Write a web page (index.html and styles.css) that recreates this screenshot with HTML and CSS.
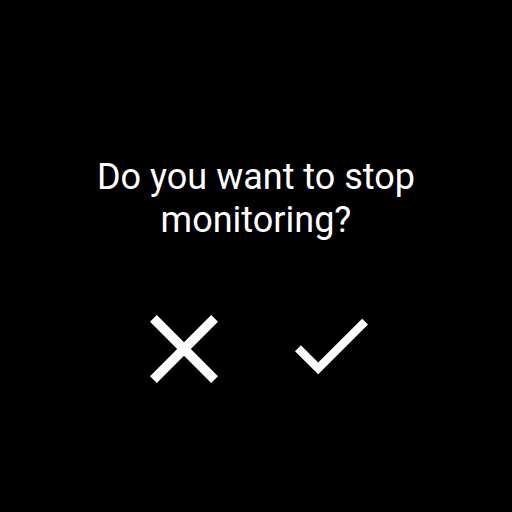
FILE: index.html
```html
<!DOCTYPE html>
<html>
<head>
<meta charset="utf-8">
<link rel="stylesheet" href="styles.css">
</head>
<body>
<main class="screen">
  <p class="question">Do you want to stop<br>monitoring?</p>
  <div class="actions">
    <button class="action action-cancel" aria-label="Cancel">
      <svg width="68" height="68" viewBox="5 5 14 14"><path fill="#fff" d="M19 6.41L17.59 5 12 10.59 6.41 5 5 6.41 10.59 12 5 17.59 6.41 19 12 13.41 17.59 19 19 17.59 13.41 12z"/></svg>
    </button>
    <button class="action action-confirm" aria-label="Confirm">
      <svg width="73" height="57" viewBox="3.41 5.59 17.59 13.41"><path fill="#fff" d="M9 16.17L4.83 12l-1.42 1.41L9 19 21 7l-1.41-1.41z"/></svg>
    </button>
  </div>
</main>
</body>
</html>
```
FILE: styles.css
```css
html, body {
  margin: 0;
  padding: 0;
  background: #000;
}
.screen {
  width: 512px;
  height: 512px;
  display: flex;
  flex-direction: column;
  align-items: center;
  box-sizing: border-box;
  padding-top: 156px;
}
.question {
  margin: 0;
  color: #fff;
  font-family: Roboto, "Noto Sans", sans-serif;
  font-size: 36px;
  line-height: 43px;
  text-align: center;
}
.actions {
  margin-top: 73px;
  display: flex;
  align-items: flex-start;
  gap: 68px;
  padding-left: 3px;
}
.action {
  width: 80px;
  height: 68px;
  padding: 0;
  border: 0;
  background: transparent;
  display: flex;
  justify-content: center;
  align-items: flex-start;
}
.action svg {
  display: block;
}
.action-confirm {
  padding-top: 3px;
}
```
